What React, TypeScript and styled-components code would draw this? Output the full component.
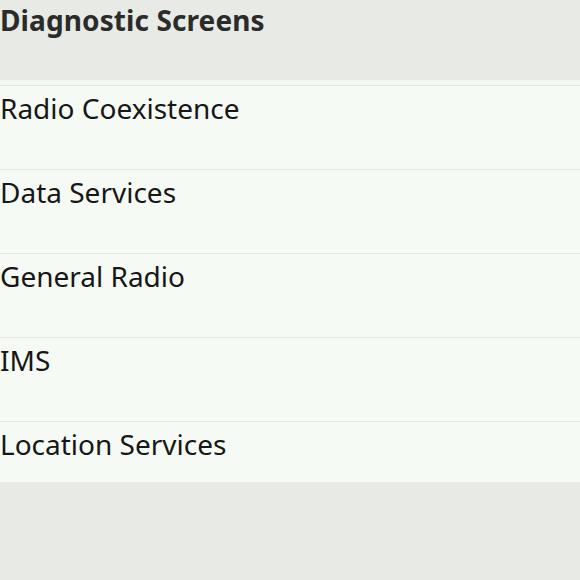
import React from "react";
import styled, { createGlobalStyle } from "styled-components";

const Global = createGlobalStyle`
  html, body { margin: 0; padding: 0; background: #e7eae5; }
  body { font-family: "Noto Sans", "Lato", sans-serif; font-variant-ligatures: none; }
`;

const Page = styled.div`
  width: 580px;
  height: 580px;
  background: #e7eae5;
  display: flex;
  flex-direction: column;
  overflow: hidden;
`;

const Header = styled.div`
  height: 80px;
  box-sizing: border-box;
  padding: 0;
  font-size: 28px;
  line-height: 40px;
  font-weight: 700;
  letter-spacing: 0.1px;
  color: #2b2c2a;
`;

const Gap = styled.div`
  height: 5px;
  background: #f3f7f2;
  border-bottom: 1px solid #e3e6e1;
`;

const List = styled.div`
  background: #f6faf5;
  height: 396px;
  overflow: hidden;
`;

const Row = styled.div`
  height: 84px;
  box-sizing: border-box;
  border-bottom: 1px solid #e4e7e2;
  padding: 2px 0 0 0;
  font-size: 28px;
  line-height: 40px;
  color: #161716;
`;

const items = ["Radio Coexistence", "Data Services", "General Radio", "IMS", "Location Services"];

export default function App() {
  return (
    <Page>
      <Global />
      <Header>Diagnostic Screens</Header>
      <Gap />
      <List>
        {items.map((t) => (
          <Row key={t}>{t}</Row>
        ))}
      </List>
    </Page>
  );
}
